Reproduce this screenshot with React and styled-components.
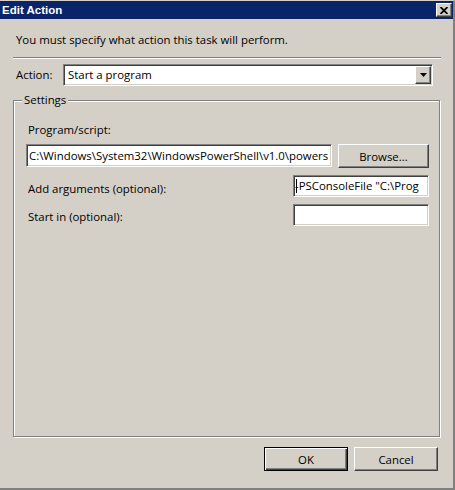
import React from 'react';
import styled, { createGlobalStyle, css } from 'styled-components';

const GlobalStyle = createGlobalStyle`
  html, body {
    margin: 0;
    padding: 0;
    background: #d4d0c8;
  }
  * {
    box-sizing: border-box;
  }
`;

const raised = css`
  background: #d4d0c8;
  border-top: 1px solid #ffffff;
  border-left: 1px solid #ffffff;
  border-right: 1px solid #404040;
  border-bottom: 1px solid #404040;
  box-shadow: inset -1px -1px 0 #808080;
`;

const sunken = css`
  background: #ffffff;
  border-top: 1px solid #808080;
  border-left: 1px solid #808080;
  border-right: 1px solid #ffffff;
  border-bottom: 1px solid #ffffff;
  box-shadow: inset 1px 1px 0 #404040, inset -1px -1px 0 #d4d0c8;
`;

const Window = styled.div`
  width: 455px;
  height: 490px;
  display: flex;
  flex-direction: column;
  background: #d4d0c8;
  border-top: 1px solid #d4d0c8;
  border-right: 2px solid #808080;
  border-bottom: 2px solid #808080;
  font-family: "Open Sans", "Noto Sans", sans-serif;
  font-size: 11.4px;
  line-height: 16px;
  color: #000000;
`;

const TitleBar = styled.div`
  height: 18px;
  flex: none;
  display: flex;
  align-items: center;
  justify-content: space-between;
  padding: 0 1px 0 2px;
  background: #0a246a;
`;

const Title = styled.span`
  color: #ffffff;
  font-family: "Liberation Sans", Arial, sans-serif;
  font-weight: bold;
  font-size: 11.5px;
`;

const CloseButton = styled.div`
  ${raised}
  width: 16px;
  height: 14px;
  display: flex;
  align-items: center;
  justify-content: center;
`;

const Body = styled.div`
  flex: 1;
  display: flex;
  flex-direction: column;
  padding: 0 12px 0 13px;
`;

const Intro = styled.div`
  margin-top: 13px;
  padding-left: 3px;
`;

const Separator = styled.div`
  margin-top: 9px;
  height: 2px;
  border-top: 1px solid #808080;
  border-bottom: 1px solid #ffffff;
`;

const ActionRow = styled.div`
  margin-top: 5px;
  display: flex;
  align-items: center;
`;

const ActionLabel = styled.span`
  width: 50px;
  padding-left: 3px;
`;

const ComboBox = styled.div`
  ${sunken}
  flex: 1;
  height: 22px;
  margin-right: 8px;
  padding: 1px;
  display: flex;
  align-items: stretch;
`;

const ComboText = styled.div`
  flex: 1;
  padding-left: 3px;
  display: flex;
  align-items: center;
`;

const ComboArrow = styled.div`
  ${raised}
  width: 16px;
  display: flex;
  align-items: center;
  justify-content: center;
`;

const GroupBox = styled.div`
  position: relative;
  margin-top: 14px;
  margin-right: 1px;
  height: 337px;
  border: 1px solid #808080;
  box-shadow: inset 1px 1px 0 #ffffff, 1px 1px 0 #ffffff;
  padding: 21px 10px 0 12px;
  display: flex;
  flex-direction: column;
`;

const Legend = styled.span`
  position: absolute;
  left: 8px;
  top: -9px;
  padding: 0 2px;
  background: #d4d0c8;
`;

const FieldLabel = styled.span`
  padding-left: 2px;
  margin-top: ${(p) => p.offset || 0}px;
`;

const ProgramRow = styled.div`
  margin-top: 6px;
  display: flex;
  gap: 6px;
`;

const OptionRow = styled.div`
  margin-top: 7px;
  display: flex;
  align-items: center;
  justify-content: space-between;
`;

const TextField = styled.div`
  ${sunken}
  width: ${(p) => p.width}px;
  height: ${(p) => p.height}px;
  padding: 0 1px 0 2px;
  display: flex;
  align-items: center;
  white-space: nowrap;
  overflow: hidden;
`;

const Caret = styled.span`
  display: inline-block;
  width: 1px;
  height: 14px;
  margin-right: -2px;
  background: #000000;
  position: relative;
  z-index: 1;
`;

const Button = styled.div`
  ${raised}
  width: ${(p) => p.width}px;
  height: ${(p) => p.height}px;
  display: flex;
  align-items: center;
  justify-content: center;
  padding-top: 1px;
  ${(p) => p.isDefault && css`
    border-color: #000000;
    box-shadow: inset 1px 1px 0 #ffffff, inset -1px -1px 0 #404040, inset -2px -2px 0 #808080;
  `}
`;

const Footer = styled.div`
  margin-top: 10px;
  padding-right: 3px;
  display: flex;
  justify-content: flex-end;
  gap: 6px;
`;

function CloseIcon() {
  return (
    <svg width="8" height="7" viewBox="0 0 8 7">
      <path d="M0.5 0 L7.5 7 M7.5 0 L0.5 7" stroke="#000" strokeWidth="1.8" />
    </svg>
  );
}

function DownArrow() {
  return (
    <svg width="7" height="4" viewBox="0 0 7 4">
      <polygon points="0,0 7,0 3.5,4" fill="#000" />
    </svg>
  );
}

export default function App() {
  return (
    <Window>
      <GlobalStyle />
      <TitleBar>
        <Title>Edit Action</Title>
        <CloseButton><CloseIcon /></CloseButton>
      </TitleBar>
      <Body>
        <Intro>You must specify what action this task will perform.</Intro>
        <Separator />
        <ActionRow>
          <ActionLabel>Action:</ActionLabel>
          <ComboBox>
            <ComboText>Start a program</ComboText>
            <ComboArrow><DownArrow /></ComboArrow>
          </ComboBox>
        </ActionRow>
        <GroupBox>
          <Legend>Settings</Legend>
          <FieldLabel>Program/script:</FieldLabel>
          <ProgramRow>
            <TextField width={306} height={23}>
              C:\Windows\System32\WindowsPowerShell\v1.0\powers
            </TextField>
            <Button width={91} height={24}>Browse...</Button>
          </ProgramRow>
          <OptionRow>
            <FieldLabel offset={5}>Add arguments (optional):</FieldLabel>
            <TextField width={136} height={22}>
              <Caret />-PSConsoleFile "C:\Prog
            </TextField>
          </OptionRow>
          <OptionRow>
            <FieldLabel offset={4}>Start in (optional):</FieldLabel>
            <TextField width={136} height={22} />
          </OptionRow>
        </GroupBox>
        <Footer>
          <Button width={84} height={24} isDefault>OK</Button>
          <Button width={84} height={24}>Cancel</Button>
        </Footer>
      </Body>
    </Window>
  );
}
